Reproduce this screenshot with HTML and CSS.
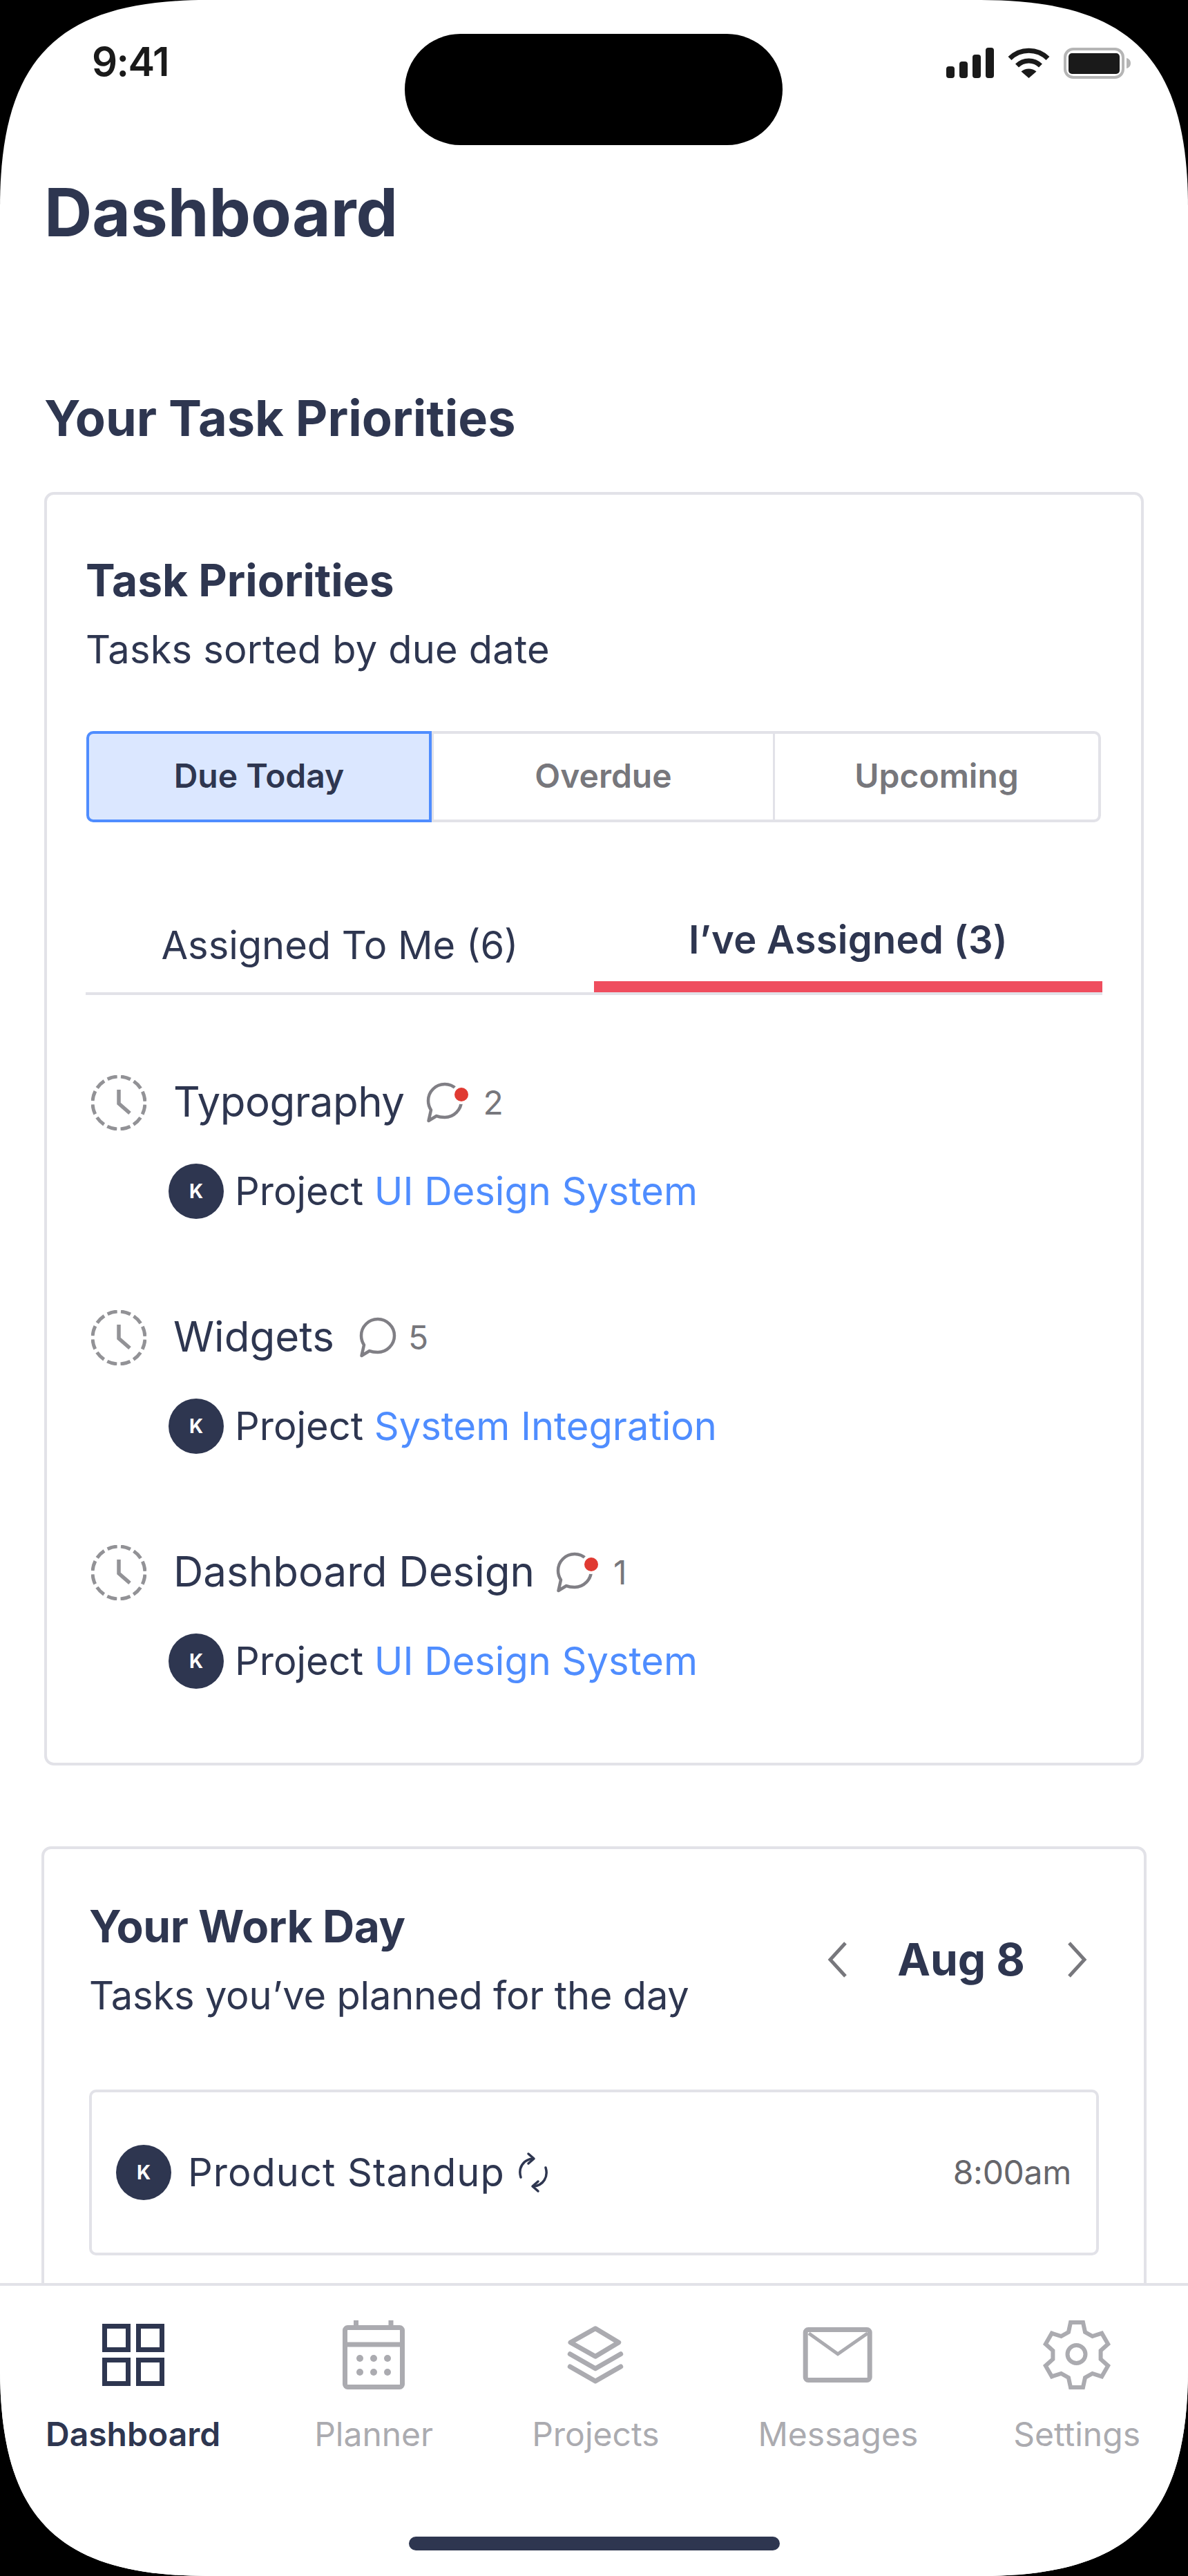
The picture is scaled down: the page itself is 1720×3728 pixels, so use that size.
FILE: index.html
```html
<!doctype html>
<html>
  <head>
    <title>Dashboard</title>
    <link rel="stylesheet" href="styles.css">
  </head>
  <body>
    <div class="screen">
      <div class="notch"></div>

      <div class="status-bar">
        <span class="clock-time">9:41</span>
        <div class="status-icons">
          <svg class="signal" viewBox="0 0 69 44" fill="#1a1a1a">
            <rect x="0" y="27" width="12" height="17" rx="4" />
            <rect x="19" y="20" width="12" height="24" rx="4" />
            <rect x="38" y="10" width="12" height="34" rx="4" />
            <rect x="57" y="0" width="12" height="44" rx="4" />
          </svg>
          <svg class="wifi" viewBox="0 0 61 44" fill="none" stroke="#1a1a1a" stroke-width="7">
            <path d="M3 15.5a39 39 0 0 1 55 0" />
            <path d="M13.5 26a24 24 0 0 1 34 0" />
            <path d="M30.5 44 19.5 34.500a17 17 0 0 1 22 0z" fill="#1a1a1a" stroke="none" />
          </svg>
          <svg class="battery" viewBox="0 0 97 45">
            <rect x="2" y="2" width="84" height="41" rx="12" fill="none" stroke="#b5b5b5" stroke-width="4" />
            <rect x="7" y="8" width="74" height="30" rx="5" fill="#1a1a1a" />
            <path d="M91 15c4 1 6 4 6 7.500s-2 6.500-6 7.500z" fill="#b5b5b5" />
          </svg>
        </div>
      </div>

      <div class="content">
        <h1>Dashboard</h1>
        <h2>Your Task Priorities</h2>

        <div class="card">
          <div class="card-title">Task Priorities</div>
          <div class="card-sub">Tasks sorted by due date</div>

          <div class="segments">
            <div class="segment active">Due Today</div>
            <div class="segment">Overdue</div>
            <div class="segment">Upcoming</div>
          </div>

          <div class="tabs">
            <div class="tab">Assigned To Me (6)</div>
            <div class="tab active">I’ve Assigned (3)</div>
          </div>

          <div class="tasks">
            <div class="task">
              <div class="task-top">
                <svg class="task-clock" viewBox="0 0 80 80" fill="none" stroke="#929296">
                  <circle class="dashes" cx="40" cy="40" r="38" stroke-width="5" />
                  <path d="M40 21v20l16 14" stroke-width="5.500" />
                </svg>
                <span class="task-name tight">Typography</span>
                <svg class="bubble with-dot" viewBox="0 0 72 62" fill="none">
                  <path d="M30 4C16.700 4 6 14.700 6 28c0 5 1.500 9.500 4 13.500L6.500 57 18 50c3.500 1.500 7.500 2 12 2 13 0 24-11 24-24S43 4 30 4z" stroke="#807f85" stroke-width="4.500" stroke-linejoin="round" />
                  <circle cx="54" cy="19" r="14" fill="#fff" />
                  <circle cx="54" cy="19" r="10" fill="#e03a32" />
                </svg>
                <span class="count">2</span>
              </div>
              <div class="task-project">
                <span class="avatar">K</span>
                <span>Project <span class="link">UI Design System</span></span>
              </div>
            </div>

            <div class="task">
              <div class="task-top">
                <svg class="task-clock" viewBox="0 0 80 80" fill="none" stroke="#929296">
                  <circle class="dashes" cx="40" cy="40" r="38" stroke-width="5" />
                  <path d="M40 21v20l16 14" stroke-width="5.500" />
                </svg>
                <span class="task-name">Widgets</span>
                <svg class="bubble" viewBox="0 0 60 62" fill="none">
                  <path d="M30 4C16.700 4 6 14.700 6 28c0 5 1.500 9.500 4 13.500L6.500 57 18 50c3.500 1.500 7.500 2 12 2 13 0 24-11 24-24S43 4 30 4z" stroke="#807f85" stroke-width="4.500" stroke-linejoin="round" />
                </svg>
                <span class="count">5</span>
              </div>
              <div class="task-project">
                <span class="avatar">K</span>
                <span>Project <span class="link">System Integration</span></span>
              </div>
            </div>

            <div class="task">
              <div class="task-top">
                <svg class="task-clock" viewBox="0 0 80 80" fill="none" stroke="#929296">
                  <circle class="dashes" cx="40" cy="40" r="38" stroke-width="5" />
                  <path d="M40 21v20l16 14" stroke-width="5.500" />
                </svg>
                <span class="task-name">Dashboard Design</span>
                <svg class="bubble with-dot" viewBox="0 0 72 62" fill="none">
                  <path d="M30 4C16.700 4 6 14.700 6 28c0 5 1.500 9.500 4 13.500L6.500 57 18 50c3.500 1.500 7.500 2 12 2 13 0 24-11 24-24S43 4 30 4z" stroke="#807f85" stroke-width="4.500" stroke-linejoin="round" />
                  <circle cx="54" cy="19" r="14" fill="#fff" />
                  <circle cx="54" cy="19" r="10" fill="#e03a32" />
                </svg>
                <span class="count">1</span>
              </div>
              <div class="task-project">
                <span class="avatar">K</span>
                <span>Project <span class="link">UI Design System</span></span>
              </div>
            </div>
          </div>
        </div>

        <div class="card card-wide">
          <div class="workday-head">
            <div>
              <div class="card-title">Your Work Day</div>
              <div class="card-sub">Tasks you’ve planned for the day</div>
            </div>
            <div class="date-nav">
              <svg class="chevron prev" viewBox="0 0 30 52" fill="none" stroke="#77777c" stroke-width="5">
                <path d="M27 2 5 26l22 24" />
              </svg>
              <span class="date-label">Aug 8</span>
              <svg class="chevron" viewBox="0 0 30 52" fill="none" stroke="#77777c" stroke-width="5">
                <path d="m3 2 22 24L3 50" />
              </svg>
            </div>
          </div>

          <div class="event">
            <div class="event-main">
              <span class="avatar">K</span>
              <span class="event-name">Product Standup</span>
              <svg class="repeat" viewBox="0 0 46 60" fill="none" stroke="#2e3650" stroke-width="3.500" stroke-linecap="round" stroke-linejoin="round">
                <path d="M5 37C1 24 8 11 23 10" />
                <path d="M16 3l8 7-8 7" />
                <path d="M41 23c4 13-3 26-18 27" />
                <path d="M30 43l-8 7 8 7" />
              </svg>
            </div>
            <span class="event-time">8:00am</span>
          </div>
        </div>
      </div>

      <div class="tab-bar">
        <div class="nav">
          <div class="nav-item active">
            <svg viewBox="0 0 120 120" fill="none" stroke="currentColor" stroke-width="7">
              <rect x="18.500" y="18.500" width="34" height="34" />
              <rect x="67.500" y="18.500" width="34" height="34" />
              <rect x="18.500" y="67.500" width="34" height="34" />
              <rect x="67.500" y="67.500" width="34" height="34" />
            </svg>
            <span>Dashboard</span>
          </div>
          <div class="nav-item">
            <svg viewBox="0 0 120 120" fill="none" stroke="currentColor" stroke-width="7">
              <rect x="18.500" y="20.500" width="83" height="86" rx="4" />
              <path d="M15 45h90M34.500 10v10M85 10v10" />
              <g fill="currentColor" stroke="none">
                <circle cx="40" cy="65" r="5" />
                <circle cx="60" cy="65" r="5" />
                <circle cx="80" cy="65" r="5" />
                <circle cx="40" cy="85" r="5" />
                <circle cx="60" cy="85" r="5" />
                <circle cx="80" cy="85" r="5" />
              </g>
            </svg>
            <span>Planner</span>
          </div>
          <div class="nav-item">
            <svg viewBox="0 0 120 120" fill="none" stroke="currentColor" stroke-width="7" stroke-linecap="round" stroke-linejoin="round">
              <path d="M60 21.700 93.700 42 60 62.300 24 42z" />
              <path d="M23.300 58.700 60 79.700 96.700 58.700" />
              <path d="M23.300 77 60 98 96.700 77" />
            </svg>
            <span>Projects</span>
          </div>
          <div class="nav-item">
            <svg viewBox="0 0 120 120" fill="none" stroke="currentColor" stroke-width="7">
              <rect x="13.200" y="23.500" width="93" height="73" rx="4" />
              <path d="M18 28.700 60 58.700 103 28.700" stroke-width="5" />
            </svg>
            <span>Messages</span>
          </div>
          <div class="nav-item">
            <svg viewBox="0 0 120 120" fill="none" stroke="currentColor" stroke-width="6">
              <path d="M48 27 51 13H69L72 27 82.600 33.100 96.200 28.700 105.200 44.300 94.600 53.900V66.100L105.200 75.700 96.200 91.300 82.600 86.900 72 93 69 107H51L48 93 37.400 86.900 23.800 91.300 14.800 75.700 25.400 66.100V53.900L14.800 44.300 23.800 28.700 37.400 33.100z" />
              <circle cx="59.500" cy="59" r="13" />
            </svg>
            <span>Settings</span>
          </div>
        </div>
        <div class="home-indicator"></div>
      </div>
    </div>
  </body>
</html>
```

FILE: styles.css
```css
:root {
  --navy: #2e3650;
  --blue: #4f8dff;
  --border: #e2e2e8;
  --muted: #77777c;
  --nav-muted: #ababb0;
}

* {
  box-sizing: border-box;
}

body {
  margin: 0;
  background-color: #000;
  font-family: Inter, "Liberation Sans", sans-serif;
  color: var(--navy);
}

.screen {
  position: relative;
  display: flex;
  flex-direction: column;
  width: 1720px;
  height: 3728px;
  background-color: #fff;
  clip-path: path("M0 300C0 84 84 0 300 0H1420C1636 0 1720 84 1720 300V3428C1720 3644 1636 3728 1420 3728H300C84 3728 0 3644 0 3428Z");
}

.notch {
  position: absolute;
  left: 586px;
  top: 49px;
  width: 547px;
  height: 161px;
  border-radius: 81px;
  background-color: #000;
}

.status-bar {
  flex: none;
  display: flex;
  justify-content: space-between;
  height: 140px;
  padding: 67px 83px 0 133px;
}

.clock-time {
  font-size: 58px;
  line-height: 44px;
  font-weight: 600;
  letter-spacing: -1.500px;
  color: #1a1a1a;
}

.status-icons {
  display: flex;
  gap: 20px;
  height: 45px;
  margin-top: 2px;
}

.signal {
  width: 69px;
  height: 44px;
}

.wifi {
  width: 61px;
  height: 44px;
}

.battery {
  width: 97px;
  height: 45px;
}

.content {
  flex: 1;
  min-height: 0;
  overflow: hidden;
  padding: 0 64px;
}

h1 {
  margin: 109px 0 0 0;
  font-size: 96px;
  line-height: 116px;
  font-weight: 700;
}

h2 {
  margin: 196px 0 63px 0;
  font-size: 72px;
  line-height: 88px;
  font-weight: 700;
}

.card {
  padding: 85px 56px 107px 56px;
  border: 4px solid var(--border);
  border-radius: 14px;
}

.card-title {
  font-size: 64px;
  line-height: 78px;
  font-weight: 700;
}

.card-sub {
  margin-top: 27px;
  font-size: 56px;
  line-height: 68px;
  letter-spacing: 0.200px;
}

.segments {
  display: grid;
  grid-template-columns: 500px 494px 1fr;
  height: 132px;
  margin: 84px 2px 0 1px;
}

.segment {
  display: flex;
  align-items: center;
  justify-content: center;
  padding-bottom: 3px;
  border: solid var(--border);
  border-width: 4px 0;
  font-size: 48px;
  font-weight: 600;
  color: var(--muted);
}

.segment + .segment {
  border-left-width: 3px;
}

.segment:last-child {
  border-right-width: 4px;
  border-radius: 0 10px 10px 0;
}

.segment.active {
  border: 4px solid var(--blue);
  border-radius: 10px 0 0 10px;
  background-color: #dbe7ff;
  color: var(--navy);
}

.tabs {
  display: grid;
  grid-template-columns: 1fr 1fr;
  align-items: end;
  margin-top: 136px;
  border-bottom: 4px solid var(--border);
  text-align: center;
}

.tab {
  padding-bottom: 34px;
  font-size: 56px;
  line-height: 68px;
}

.tab.active {
  padding-bottom: 26px;
  border-bottom: 16px solid #ef4d5e;
  font-weight: 600;
  letter-spacing: 0.300px;
}

.tasks {
  display: flex;
  flex-direction: column;
  gap: 132px;
  margin-top: 116px;
}

.task-top {
  display: flex;
  align-items: center;
  height: 80px;
  margin-left: 8px;
}

.task-clock {
  width: 80px;
  height: 80px;
  margin-right: 39px;
}

.dashes {
  stroke-dasharray: 14.500 5.400;
  stroke-dashoffset: -2.700;
}

.task-name {
  margin-bottom: 4px;
  font-size: 60px;
  line-height: 72px;
}

.task-name.tight {
  letter-spacing: -0.500px;
}

.bubble {
  width: 60px;
  height: 62px;
  margin-left: 33px;
  margin-right: 14px;
}

.bubble.with-dot {
  width: 72px;
  margin-left: 28px;
  margin-right: 14px;
}

.count {
  font-size: 48px;
  line-height: 58px;
  color: var(--muted);
}

.task-project {
  display: flex;
  align-items: center;
  gap: 16px;
  margin-top: 48px;
  margin-left: 120px;
  font-size: 56px;
  line-height: 68px;
}

.link {
  color: var(--blue);
}

.avatar {
  flex: none;
  display: flex;
  align-items: center;
  justify-content: center;
  width: 80px;
  height: 80px;
  border-radius: 50%;
  background-color: var(--navy);
  color: #fff;
  font-size: 28px;
  line-height: 34px;
  font-weight: 700;
}

.card-wide {
  margin: 117px -4px 0 -4px;
  padding: 73px 65px 107px 65px;
}

.card-wide .card-title {
  letter-spacing: -0.400px;
}

.card-wide .card-sub {
  letter-spacing: -0.200px;
}

.workday-head {
  display: flex;
  align-items: center;
  justify-content: space-between;
}

.date-nav {
  display: flex;
  align-items: center;
  gap: 61px;
  padding-right: 16px;
}

.chevron {
  width: 30px;
  height: 52px;
}

.chevron.prev {
  margin-right: 11px;
}

.date-label {
  font-size: 64px;
  line-height: 78px;
  font-weight: 700;
}

.event {
  display: flex;
  align-items: center;
  justify-content: space-between;
  height: 240px;
  margin-top: 102px;
  padding: 0 36px 0 35px;
  border: 4px solid var(--border);
  border-radius: 10px;
}

.event-main {
  display: flex;
  align-items: center;
  gap: 24px;
}

.event-name {
  font-size: 56px;
  line-height: 68px;
  letter-spacing: 1px;
}

.repeat {
  width: 46px;
  height: 60px;
  margin-left: -6px;
}

.event-time {
  font-size: 48px;
  line-height: 58px;
  letter-spacing: -0.300px;
  color: #66666b;
}

.tab-bar {
  flex: none;
  display: flex;
  flex-direction: column;
  height: 424px;
  padding-top: 40px;
  border-top: 4px solid var(--border);
  background-color: #fff;
}

.nav {
  display: flex;
  gap: 143px;
  padding: 0 66px;
}

.nav-item {
  display: flex;
  flex-direction: column;
  align-items: center;
  gap: 26px;
  font-size: 48px;
  line-height: 58px;
  color: var(--nav-muted);
}

.nav-item svg {
  width: 120px;
  height: 120px;
}

.nav-item.active {
  margin-right: -7px;
  color: var(--navy);
  font-weight: 600;
}

.nav-item:last-child {
  margin-left: -5px;
}

.home-indicator {
  align-self: center;
  width: 537px;
  height: 20px;
  margin-top: 119px;
  border-radius: 10px;
  background-color: var(--navy);
}
```
